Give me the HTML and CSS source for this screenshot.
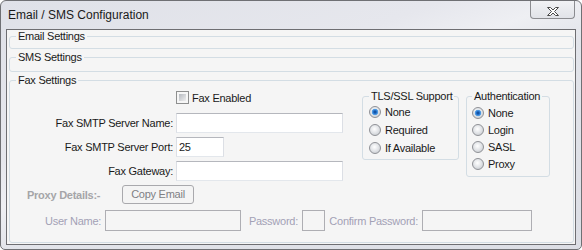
FILE: index.html
```html
<!DOCTYPE html>
<html lang="en">
  <head>
    <meta charset="UTF-8" />
    <title>Email / SMS Configuration</title>
    <link rel="stylesheet" href="styles.css">
  </head>
  <body>
    <div class="window">
      <div class="titlebar">
        <span class="title">Email / SMS Configuration</span>
        <div class="close-btn">
          <svg width="12" height="9" viewBox="0 0 12 9">
            <polygon points="0.5,0.5 3.5,0.5 6,3 8.5,0.5 11.5,0.5 7.5,4.5 11.5,8.5 8.5,8.5 6,6 3.5,8.5 0.5,8.5 4.5,4.5" fill="#fff" stroke="#4a4a4a" stroke-width="1" stroke-linejoin="round" />
          </svg>
        </div>
      </div>

      <div class="client">
        <fieldset class="group group-email">
          <legend>Email Settings</legend>
        </fieldset>

        <fieldset class="group group-sms">
          <legend>SMS Settings</legend>
        </fieldset>

        <fieldset class="group group-fax">
          <legend>Fax Settings</legend>

          <div class="fax-top">
            <!-- Fax server fields -->
            <div class="fax-form">
              <div class="check-row">
                <span class="checkbox"></span>
                <span>Fax Enabled</span>
              </div>
              <span class="label">Fax SMTP Server Name:</span>
              <div class="textbox wide"></div>
              <span class="label">Fax SMTP Server Port:</span>
              <div class="textbox port">25</div>
              <span class="label">Fax Gateway:</span>
              <div class="textbox wide"></div>
            </div>

            <!-- TLS / SSL options -->
            <fieldset class="group options tls">
              <legend>TLS/SSL Support</legend>
              <div class="radio-row"><span class="radio checked"></span>None</div>
              <div class="radio-row"><span class="radio"></span>Required</div>
              <div class="radio-row"><span class="radio"></span>If Available</div>
            </fieldset>

            <!-- Authentication options -->
            <fieldset class="group options auth">
              <legend>Authentication</legend>
              <div class="radio-row"><span class="radio checked"></span>None</div>
              <div class="radio-row"><span class="radio"></span>Login</div>
              <div class="radio-row"><span class="radio"></span>SASL</div>
              <div class="radio-row"><span class="radio"></span>Proxy</div>
            </fieldset>
          </div>

          <div class="proxy-row">
            <span class="proxy-label">Proxy Details:-</span>
            <div class="btn-disabled">Copy Email</div>
          </div>

          <div class="user-row">
            <span class="label disabled">User Name:</span>
            <div class="textbox off"></div>
            <span class="label disabled">Password:</span>
            <div class="textbox off"></div>
            <span class="label disabled">Confirm Password:</span>
            <div class="textbox off"></div>
          </div>
        </fieldset>
      </div>
    </div>
  </body>
</html>
```

FILE: styles.css
```css
body {
  margin: 0;
  font-family: "Liberation Sans", Arial, sans-serif;
  font-size: 11px;
  letter-spacing: -0.25px;
  color: #1a1a1a;
}

.window {
  box-sizing: border-box;
  width: 582px;
  height: 250px;
  border: 1px solid #6f7074;
  border-radius: 6px 6px 5px 5px;
  background: linear-gradient(160deg, #dfe1e8 0%, #e6e7ed 35%, #eeeff3 45%, #e2e4ea 55%, #dcdee5 100%);
  display: flex;
  flex-direction: column;
}

.titlebar {
  height: 28px;
  display: flex;
  align-items: flex-start;
  flex-shrink: 0;
}

.title {
  font-size: 12px;
  letter-spacing: 0;
  line-height: 28px;
  padding-left: 7px;
  color: #1a1a1a;
}

.close-btn {
  box-sizing: border-box;
  margin-left: auto;
  margin-right: 6px;
  width: 45px;
  height: 18px;
  border: 1px solid #8b8c90;
  border-top: none;
  border-radius: 0 0 4px 4px;
  background: linear-gradient(#f1f2f5, #e1e3e8);
  display: flex;
  justify-content: center;
  padding-top: 6px;
}

.client {
  box-sizing: border-box;
  height: 216px;
  margin: 0 5px;
  border: 1px solid #6e6e72;
  background: #f5f5f5;
  padding: 0 1px 1px 2px;
  display: flex;
  flex-direction: column;
}

.group {
  margin: 0;
  padding: 0;
  border: 1px solid #d3dde4;
  border-radius: 3px;
  min-width: 0;
}

.group legend {
  margin-left: 6px;
  padding: 0 2px;
  line-height: 13px;
  white-space: nowrap;
}

.group-email {
  padding-bottom: 5px;
}

.group-sms {
  margin-top: 2px;
  padding-bottom: 7px;
}

.group-fax {
  margin-top: 2px;
  flex: 1;
}

.fax-top {
  display: flex;
  align-items: flex-start;
}

.fax-form {
  width: 352px;
  flex-shrink: 0;
  padding-top: 4px;
  display: grid;
  grid-template-columns: 163px 167px;
  column-gap: 3px;
  row-gap: 4px;
  align-items: center;
}

.check-row {
  grid-column: 2;
  display: flex;
  align-items: center;
  gap: 3px;
  height: 13px;
  margin-bottom: 5px;
}

.checkbox {
  box-sizing: border-box;
  width: 13px;
  height: 13px;
  border: 1px solid #8e8f8f;
  padding: 2px;
  background: linear-gradient(135deg, #b6bac0, #eeeeef) content-box, #f6f6f6;
}

.label {
  text-align: right;
  white-space: nowrap;
}

.textbox {
  box-sizing: border-box;
  height: 20px;
  border: 1px solid;
  border-color: #b5b7bd #dcdfe5 #e3e7ec #dcdfe5;
  background: #fff;
  padding-left: 2px;
  line-height: 18px;
}

.textbox.port {
  width: 48px;
}

.options {
  margin-top: 3px;
  flex-shrink: 0;
  box-sizing: border-box;
}

.tls {
  width: 97px;
  padding-bottom: 2px;
}

.tls .radio-row {
  height: 18px;
  padding-left: 6px;
}

.auth {
  width: 84px;
  margin-left: 7px;
  padding-top: 1px;
  padding-bottom: 4px;
}

.auth legend {
  margin-left: 5px;
}

.auth .radio-row {
  height: 17px;
  padding-left: 5px;
}

.radio-row {
  display: flex;
  align-items: center;
  gap: 4px;
}

.radio {
  box-sizing: border-box;
  width: 12px;
  height: 12px;
  border-radius: 50%;
  border: 1px solid #8f9196;
  background: radial-gradient(circle at 45% 40%, #ffffff 0, #e4e6e9 45%, #bfc3c8 100%);
}

.radio.checked {
  background:
    radial-gradient(circle at 50% 50%, #0d3f84 0, #1e6bc6 1.5px, #5fa8ea 3px, rgba(95, 168, 234, 0) 3.6px),
    radial-gradient(circle at 45% 40%, #ffffff 0, #e4e6e9 45%, #bfc3c8 100%);
}

.proxy-row {
  display: flex;
  align-items: center;
  margin-top: 4px;
  padding-left: 17px;
}

.proxy-label {
  width: 95px;
  font-weight: bold;
  color: #a5a5a8;
}

.btn-disabled {
  box-sizing: border-box;
  width: 72px;
  height: 19px;
  border: 1px solid #a9a9ad;
  border-radius: 3px;
  background: #f4f4f4;
  color: #7f7f84;
  text-align: center;
  line-height: 17px;
}

.user-row {
  display: grid;
  grid-template-columns: 60px 136px 61px 23px 97px 110px;
  align-items: center;
  margin-top: 6px;
  padding-left: 35px;
}

.user-row .label {
  padding-right: 4px;
}

.disabled {
  color: #a3a1b5;
}

.textbox.off {
  border-color: #aeaeb3;
  background: #f5f5f5;
  height: 21px;
}
```
